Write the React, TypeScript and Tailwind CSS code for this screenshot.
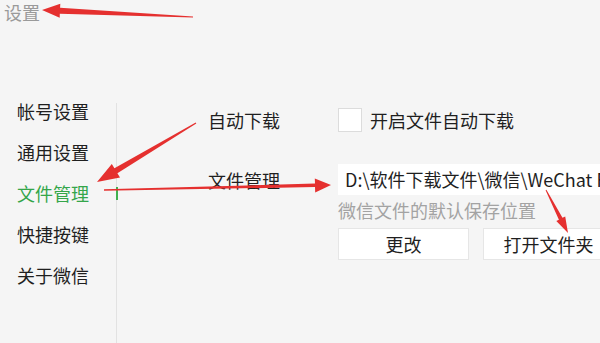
import React from "react";

type Pt = [number, number];

function arrowPoints(T: Pt, P: Pt, w0: number, w1: number, L: number, H: number): string {
  const dx = P[0] - T[0];
  const dy = P[1] - T[1];
  const len = Math.hypot(dx, dy);
  const ux = dx / len;
  const uy = dy / len;
  const nx = -uy;
  const ny = ux;
  const bx = P[0] - ux * L;
  const by = P[1] - uy * L;
  const pts: Pt[] = [
    [T[0] + (nx * w0) / 2, T[1] + (ny * w0) / 2],
    [bx + (nx * w1) / 2, by + (ny * w1) / 2],
    [bx + (nx * H) / 2, by + (ny * H) / 2],
    P,
    [bx - (nx * H) / 2, by - (ny * H) / 2],
    [bx - (nx * w1) / 2, by - (ny * w1) / 2],
    [T[0] - (nx * w0) / 2, T[1] - (ny * w0) / 2],
  ];
  return pts.map((p) => `${p[0].toFixed(1)},${p[1].toFixed(1)}`).join(" ");
}

const menu = ["帐号设置", "通用设置", "文件管理", "快捷按键", "关于微信"];

export default function App() {
  return (
    <div
      className="relative w-[600px] h-[343px] overflow-hidden bg-[#f5f5f5] flex flex-col text-[#1f1f1f]"
      style={{ fontFamily: '"Microsoft YaHei", "Noto Sans CJK SC", "Noto Sans", sans-serif' }}
    >
      <div className="pl-[4px] h-[24px] leading-[24px] text-[18px] text-[#9a9a9a]">设置</div>
      <div className="mt-[66px] flex flex-1 min-w-0">
        <div className="w-[116px] shrink-0 flex flex-col pt-[1px]">
          {menu.map((m, i) => (
            <div
              key={m}
              className={`relative h-[41px] leading-[41px] pl-[17px] text-[18px] whitespace-nowrap ${
                i === 2 ? "text-[#34a64a]" : "text-[#1f1f1f]"
              }`}
            >
              {m}
              {i === 2 && (
                <span className="absolute right-[-2px] top-[14px] w-[2px] h-[13px] bg-[#3fb24f]" />
              )}
            </div>
          ))}
        </div>
        <div className="mt-[13px] w-[484px] shrink-0 border-l border-[#e2e2e2] pl-[91px] pt-[5px] flex flex-col">
          <div className="flex items-center h-[24px]">
            <div className="w-[130px] shrink-0 text-[18px] leading-[24px] whitespace-nowrap">自动下载</div>
            <div className="w-[24px] h-[24px] shrink-0 bg-white border border-[#dcdcdc]" />
            <div className="ml-[8px] text-[18px] leading-[24px] whitespace-nowrap">开启文件自动下载</div>
          </div>
          <div className="mt-[32px] flex items-center">
            <div className="w-[130px] text-[18px] leading-[24px] shrink-0 whitespace-nowrap">文件管理</div>
            <div className="w-[300px] shrink-0 h-[31px] bg-white pl-[7px] text-[18px] leading-[31px] whitespace-nowrap overflow-hidden">
              D:\软件下载文件\微信\WeChat Files
            </div>
          </div>
          <div className="ml-[130px] mt-[4px] text-[18px] leading-[22px] text-[#a3a3a3] whitespace-nowrap">
            微信文件的默认保存位置
          </div>
          <div className="ml-[130px] mt-[7px] flex gap-[14px]">
            <div className="w-[131px] shrink-0 h-[32px] bg-white border border-[#e6e6e6] text-[18px] leading-[30px] text-center">
              更改
            </div>
            <div className="w-[131px] shrink-0 h-[32px] bg-white border border-[#e6e6e6] text-[18px] leading-[30px] text-center whitespace-nowrap">
              打开文件夹
            </div>
          </div>
        </div>
      </div>
      <svg className="absolute inset-0 pointer-events-none" width="600" height="343" viewBox="0 0 600 343">
        <polygon points={arrowPoints([193, 17], [42, 10], 1, 6, 18, 14)} fill="#e5302f" />
        <polygon points={arrowPoints([196, 123], [97, 182], 1, 6, 22, 16)} fill="#e5302f" />
        <polygon points={arrowPoints([104, 190], [331, 185], 1.5, 3.5, 16, 14)} fill="#e5302f" />
        <polygon points={arrowPoints([546, 190], [568, 233], 1, 4, 16, 10)} fill="#e5302f" />
      </svg>
    </div>
  );
}
